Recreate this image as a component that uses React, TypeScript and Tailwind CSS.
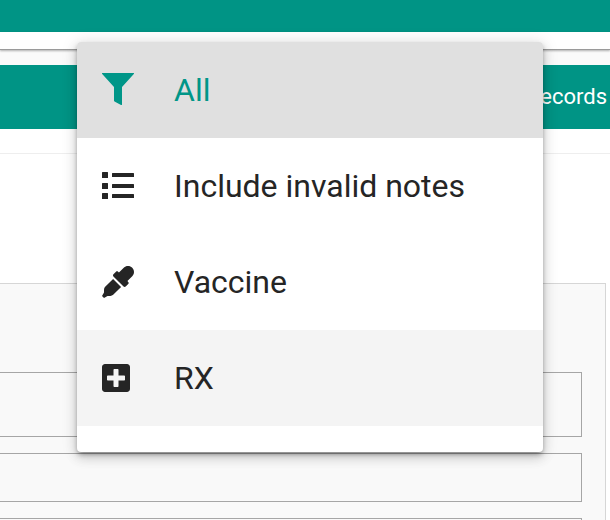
import type { ReactNode } from "react";
import { FaEyeDropper, FaPlusSquare } from "react-icons/fa";

function FilterIcon() {
  return (
    <svg viewBox="0 0 32 34" className="h-[34px] w-8" fill="currentColor">
      <path d="M0.500 0H31.500C32 0 32.200 0.600 31.800 1L20 14V31.500C20 32 19.500 32.300 19 32L12.500 28.500C12.200 28.300 12 28 12 27.500V14L0.200 1C-0.200 0.600 0 0 0.500 0Z" />
    </svg>
  );
}

function ListIcon() {
  return (
    <svg viewBox="0 0 32 32" className="h-8 w-8" fill="currentColor">
      <rect x="0" y="2" width="6" height="6" rx="0.5" />
      <rect x="0" y="13" width="6" height="6" rx="0.5" />
      <rect x="0" y="23" width="6" height="6" rx="0.5" />
      <rect x="10" y="3" width="22" height="4" rx="0.5" />
      <rect x="10" y="14" width="22" height="4" rx="0.5" />
      <rect x="10" y="24" width="22" height="4" rx="0.5" />
    </svg>
  );
}

const items: { label: string; icon: ReactNode; row: string }[] = [
  { label: "All", icon: <FilterIcon />, row: "bg-[#e0e0e0] text-[#009688]" },
  { label: "Include invalid notes", icon: <ListIcon />, row: "text-[#252525]" },
  { label: "Vaccine", icon: <FaEyeDropper className="h-8 w-8" />, row: "text-[#252525]" },
  { label: "RX", icon: <FaPlusSquare className="h-8 w-7" />, row: "bg-[#f4f4f4] text-[#252525]" },
];

export default function App() {
  return (
    <div className="relative h-[520px] w-[610px] overflow-hidden bg-white font-['Roboto',sans-serif]">
      <div className="h-8 bg-[#009485]" />
      <div className="relative h-[18px] border-b border-[#9a9a9a] bg-white shadow-[0_1px_2px_rgba(0,0,0,0.3)]" />
      <div className="h-[15px] bg-[#fafafa]" />
      <div className="flex h-16 items-center justify-end bg-[#009485] pr-[3px]">
        <span className="text-[22px] leading-none text-white">Records</span>
      </div>
      <div className="h-[25px] border-b border-[#eeeeee] bg-white" />
      <div className="h-[129px] bg-white" />

      <div className="ml-[-10px] h-[300px] w-[616px] border border-[#d6d6d6] bg-[#f9f9f9] pt-[88px]">
        <div className="flex flex-col gap-[16px]">
          <div className="h-[65px] w-[591px] border border-[#a6a6a6]" />
          <div className="h-[49px] w-[591px] border border-[#a6a6a6]" />
          <div className="h-[49px] w-[591px] border border-[#a6a6a6]" />
        </div>
      </div>

      <div className="absolute top-[42px] left-[77px] w-[466px] overflow-hidden rounded bg-white pb-[26px] shadow-[0_3px_5px_-1px_rgba(0,0,0,0.4),0_6px_12px_1px_rgba(0,0,0,0.12),0_1px_16px_2px_rgba(0,0,0,0.09)]">
        {items.map(({ label, icon, row }) => (
          <div key={label} className={`flex h-24 items-center ${row}`}>
            <div className="flex w-[97px] shrink-0 pl-[25px]">{icon}</div>
            <span className="text-[32px] leading-none">{label}</span>
          </div>
        ))}
      </div>
    </div>
  );
}
